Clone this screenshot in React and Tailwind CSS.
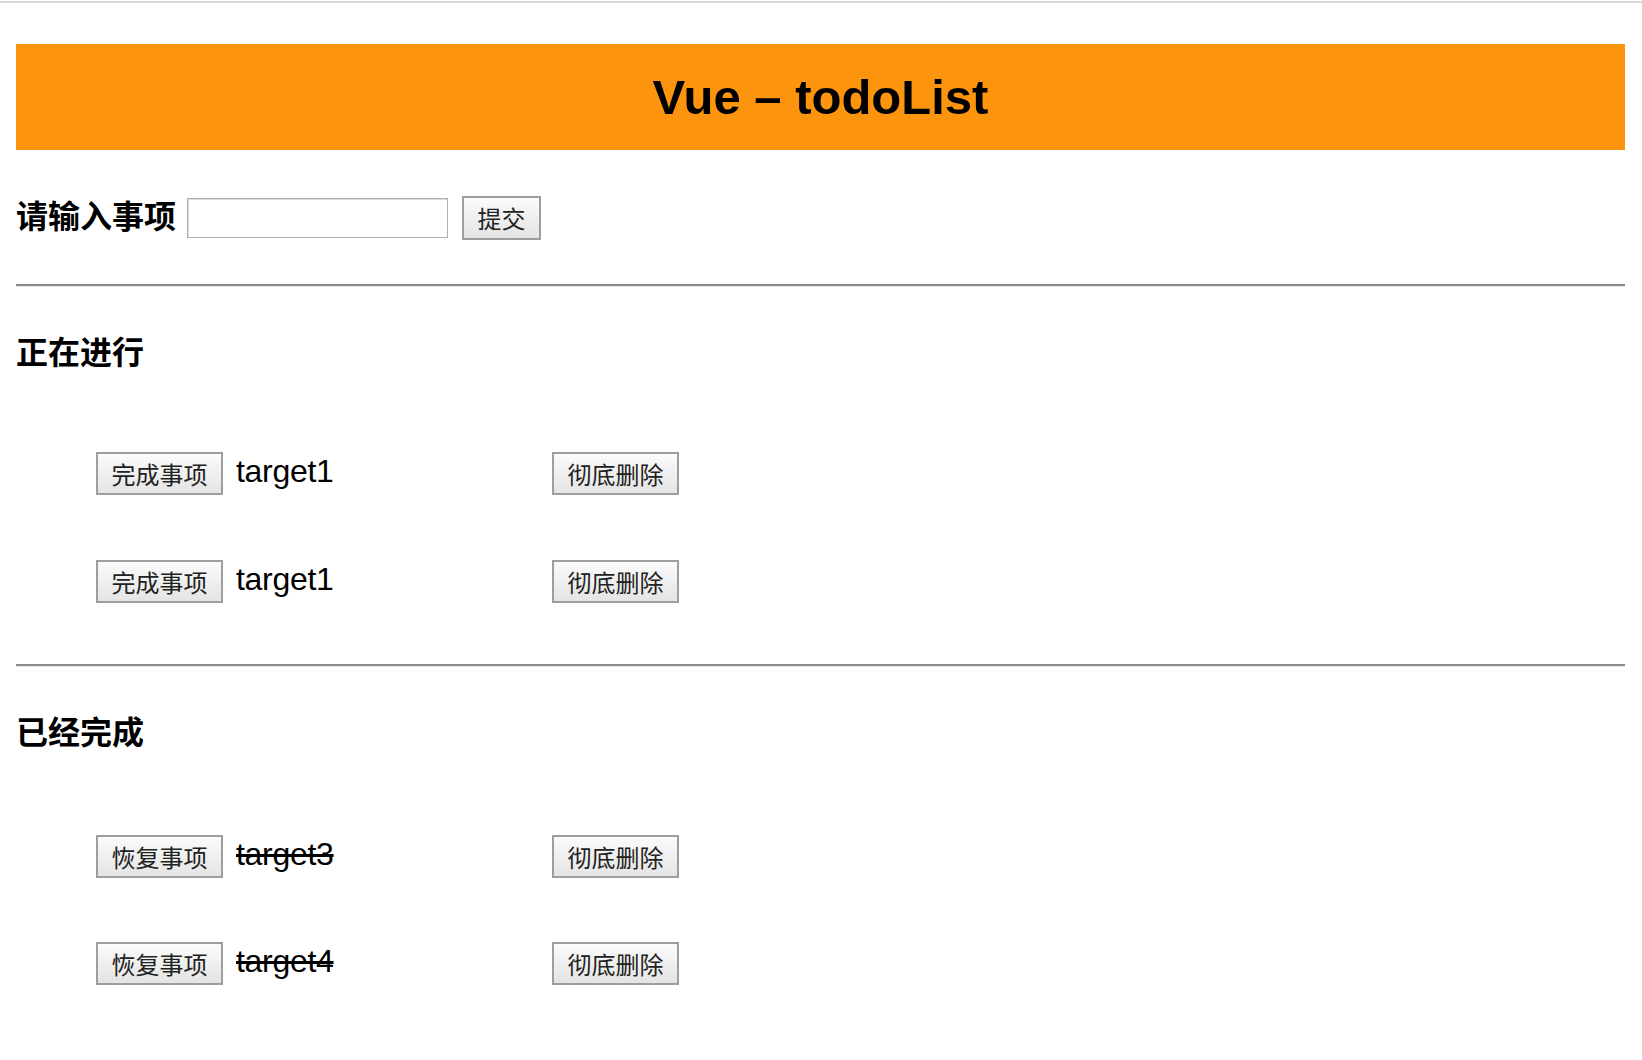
import React from "react";

const cjk = { fontFamily: '"Noto Sans CJK SC", "Liberation Sans", sans-serif' };
const lat = { fontFamily: '"Liberation Sans", "Noto Sans CJK SC", sans-serif' };

function Btn({ children, w = "w-[127px]", h = "h-[43px]" }) {
  return (
    <button
      className={`${w} ${h} shrink-0 border-2 border-[#9e9e9e] bg-gradient-to-b from-[#fbfbfb] to-[#e4e4e4] text-[24px] leading-none text-[#222] flex items-center justify-center`}
      style={cjk}
    >
      {children}
    </button>
  );
}

function Row({ action, text, done, mt }) {
  return (
    <div className={`${mt} h-[43px] pl-[80px] flex items-center`}>
      <Btn>{action}</Btn>
      <span
        className={`ml-[13px] mb-[5px] w-[316px] shrink-0 text-[32px] tracking-[-0.3px] text-black ${done ? "line-through" : ""}`}
        style={lat}
      >
        {text}
      </span>
      <Btn>彻底删除</Btn>
    </div>
  );
}

function Hr({ mt }) {
  return <div className={`${mt} border-t-2 border-[#8c8c8c] border-b border-b-[#e8e8e8] h-[3px]`} />;
}

export default function App() {
  return (
    <div className="w-[1642px] h-[1060px] bg-white overflow-hidden">
      <div className="h-[3px] border-t border-t-white bg-[#d9d9de]" />
      <div className="pl-[16px] pr-[17px]">
        <div className="mt-[41px] h-[106px] bg-[#fd940d] flex items-center justify-center">
          <h1 className="text-[49px] font-bold text-black leading-none" style={lat}>
            Vue – todoList
          </h1>
        </div>
        <div className="mt-[46px] h-[44px] flex items-center">
          <span className="mb-[9px] text-[32px] font-bold text-black leading-none" style={cjk}>
            请输入事项
          </span>
          <input
            className="ml-[11px] w-[261px] h-[40px] border border-[#b0b0b0] shadow-[inset_1px_1px_0_#dcdcdc] outline-none bg-white"
            type="text"
          />
          <div className="ml-[14px]">
            <Btn w="w-[79px]" h="h-[44px]">提交</Btn>
          </div>
        </div>
        <Hr mt="mt-[44px]" />
        <div className="mt-[35px] h-[56px] flex items-center">
          <h2 className="text-[32px] font-bold text-black leading-none" style={cjk}>
            正在进行
          </h2>
        </div>
        <Row mt="mt-[74px]" action="完成事项" text="target1" />
        <Row mt="mt-[65px]" action="完成事项" text="target1" />
        <Hr mt="mt-[61px]" />
        <div className="mt-[35px] h-[56px] flex items-center">
          <h2 className="text-[32px] font-bold text-black leading-none" style={cjk}>
            已经完成
          </h2>
        </div>
        <Row mt="mt-[77px]" action="恢复事项" text="target3" done />
        <Row mt="mt-[64px]" action="恢复事项" text="target4" done />
      </div>
    </div>
  );
}
